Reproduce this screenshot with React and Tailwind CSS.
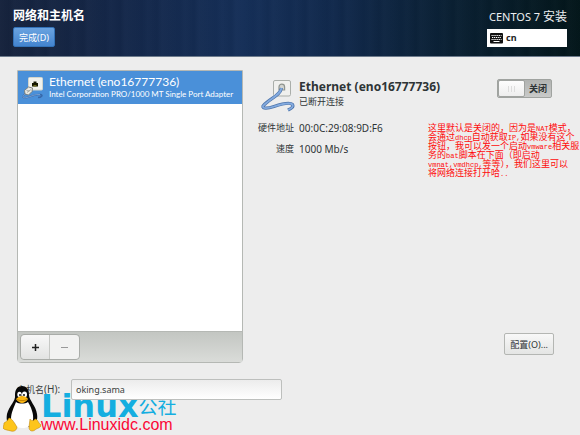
function PortIcon() {
  return (
    <svg viewBox="0 0 24 24" className="size-6 shrink-0" aria-hidden="true">
      <path d="M4 17C-1 21 1 22.500 5 21.500S13 18 18 18.500c4 .5 1 3-2 3" fill="none" stroke="#3869aa" strokeWidth="1.600" />
      <path d="M4 17C-1 21 1 22.500 5 21.500S13 18 18 18.500" fill="none" stroke="#9dbfe8" strokeWidth=".6" />
      <rect x="6.500" y="1.500" width="14" height="12.500" rx="1" fill="#f1f2ed" stroke="#d3d5cc" />
      <path d="M10 10.500V7h1.500V5.500h3V7H16v3.500z" fill="#151800" />
      <path d="M11.500 10.500h3V9h-3z" fill="#6b6a1c" />
      <path d="M2.500 14.500l4-3.500 4 1-.5 3.500-3.500 3.500-3.500-1z" fill="#e9e9e4" stroke="#777c77" strokeWidth=".9" />
      <path d="M4.500 14.500l3 .5M5 16.500l4-3" stroke="#8b908b" strokeWidth=".7" />
    </svg>
  );
}

function CableIcon() {
  return (
    <svg viewBox="0 0 36 34" className="h-[34px] w-9 shrink-0" aria-hidden="true">
      <rect x="13.500" y="1.500" width="17" height="15.500" rx="1.500" fill="#f0f0ee" stroke="#aaaeaa" />
      <path d="M19 11V8a2.800 2.800 0 0 1 5.600 0v3z" fill="#d2d4d0" stroke="#8f948f" strokeWidth="1.200" />
      <path d="M21.500 9C20 17 10 19 3 27C2 30 8 29.500 14 27.500S30 23 32.500 25.500C34 28 31 29.500 28 31" fill="none" stroke="#4d74ab" strokeWidth="3.200" strokeLinejoin="round" />
      <path d="M21.500 9C20 17 10 19 3 27C2 30 8 29.500 14 27.500S30 23 32.500 25.500C34 28 31 29.500 28 31" fill="none" stroke="#84abdf" strokeWidth="1.800" strokeLinejoin="round" />
    </svg>
  );
}

function KeyboardIcon() {
  return (
    <svg viewBox="0 0 13 11" className="h-[11px] w-[13px]" aria-hidden="true">
      <rect width="13" height="10.500" rx="1" fill="#111" />
      <path d="M1.500 2.500h10M2 4.500h9.500M1.500 6.500h10" stroke="#fff" strokeWidth="1" strokeDasharray="1.200 .7" />
      <path d="M3.500 8.500h6" stroke="#fff" />
    </svg>
  );
}

function Tux() {
  return (
    <svg viewBox="0 0 38 46" className="h-[46px] w-[38px]" aria-hidden="true">
      <path d="M12 9C12 3 15 0 19 0s7 3 7 9c0 5 7 11 8 19 1 6-1 11-6 13H10C4 39 3 34 4 28 6 20 13 15 12 9z" fill="#080808" />
      <path d="M13 16c3 2 9 2 12 0 3 5 6 12 5 18-1 6-5 8-11 8S8 39 8 33c0-6 3-12 5-17z" fill="#fff" />
      <ellipse cx="16.500" cy="8.500" rx="2.200" ry="2.800" fill="#fff" />
      <ellipse cx="21.500" cy="8.500" rx="2.500" ry="3" fill="#fff" />
      <circle cx="17" cy="9" r="1" fill="#111" />
      <circle cx="21" cy="9" r="1" fill="#111" />
      <path d="M13 13c2-2 4-3 6-3s5 1 6 3c-1 2-4 4-6 4s-5-2-6-4z" fill="#fbb612" />
      <path d="M14 13.500c3 1.500 7 1.500 10 0" fill="none" stroke="#a86b00" strokeWidth=".7" />
      <path d="M6 32c3 0 6 6 8 9 0 3-3 5-6 4-3-1-7-1-8-3 0-1 1-3 1-5 1-1 3-1 5-5z" fill="#fdc51b" stroke="#b67a00" strokeWidth=".5" />
      <path d="M27 33c1 2 4 2 5 0 3 0 3 4 6 6 0 3-4 3-6 5-3 2-6 1-6-3z" fill="#fdc51b" stroke="#b67a00" strokeWidth=".5" />
    </svg>
  );
}

function Header() {
  return (
    <header className="flex items-start justify-between border-b border-[#6d7b8c] bg-[repeating-linear-gradient(90deg,#ffffff03_0px,#00000008_9px,#ffffff04_14px,#00000004_31px,#ffffff03_37px),linear-gradient(90deg,#16233d_0%,#142749_20%,#152f58_42%,#11294c_58%,#0a2033_78%,#03161a_100%)] px-[13px] pt-2 pb-[9px]">
      <div className="flex flex-col items-start gap-1">
        <h1 className="text-[12px] leading-[15px] font-bold text-white">网络和主机名</h1>
        <button className="h-5 rounded-xs border border-[#3372b8] bg-linear-to-b from-[#6aa3e0] to-[#4384cf] px-[5px] text-[9px] leading-none text-white">
          完成(D)
        </button>
      </div>
      <div className="flex w-20 flex-col items-end gap-1">
        <p className="text-[11px] leading-[17px] whitespace-nowrap text-[#eef0f2]">CENTOS 7 <span className="text-[12px]">安装</span></p>
        <button className="flex h-[18px] w-full items-center gap-[3px] bg-white px-[3px] text-[9px] font-bold text-[#222]">
          <KeyboardIcon />
          cn
        </button>
      </div>
    </header>
  );
}

function DeviceList() {
  return (
    <section className="flex min-w-0 flex-col rounded-b-sm border border-[#b5b8b4] bg-white">
      <ul className="flex-1">
        <li>
          <button className="flex w-full items-center gap-[3px] bg-[#4a90d9] px-1 py-1 text-left font-[Lato,'Noto_Sans',sans-serif] text-white">
            <PortIcon />
            <span className="whitespace-nowrap">
              <span className="block text-[12px] leading-[14px]">Ethernet (eno16777736)</span>
              <span className="block text-[8px] leading-[11px]">Intel Corporation PRO/1000 MT Single Port Adapter</span>
            </span>
          </button>
        </li>
      </ul>
      <div className="flex border-t border-[#b5b8b4] bg-linear-to-b from-[#c3c6c2] to-[#dadcd9] p-[2px]">
        <div className="flex rounded-sm border border-[#a9aca8] text-[#2e3436]">
          <button aria-label="+" className="flex h-6 w-[29px] items-center justify-center rounded-l-sm border-r border-[#c6c8c5] bg-linear-to-b from-[#f8f8f8] to-[#e2e3e2]">
            <svg viewBox="0 0 9 9" className="size-[9px]"><path d="M4.500 1v7M1 4.500h7" stroke="#222" strokeWidth="1.500" /></svg>
          </button>
          <button aria-label="−" disabled className="flex h-6 w-[29px] items-center justify-center rounded-r-sm bg-[#f2f2f1]">
            <svg viewBox="0 0 9 9" className="size-[9px]"><path d="M1 4.500h7" stroke="#999" /></svg>
          </button>
        </div>
      </div>
    </section>
  );
}

function DeviceDetails() {
  return (
    <section className="flex min-w-0 flex-col pt-[9px] text-[#2e3436]">
      <div className="flex items-start pr-7">
        <div className="flex flex-1 items-start gap-[3px] pl-[3px]">
          <CableIcon />
          <div className="whitespace-nowrap">
            <h2 className="text-[12px] leading-4 font-bold">Ethernet (eno16777736)</h2>
            <p className="text-[9px] leading-[14px]">已断开连接</p>
          </div>
        </div>
        <button role="switch" aria-checked="false" className="flex h-[19px] w-[55px] items-center rounded-xs border border-[#a0a3a0] bg-linear-to-b from-[#b1b3b1] to-[#c9cac9] text-[9px] font-bold">
          <span className="flex h-[17px] w-[27px] items-center justify-center gap-[2px] rounded-xs border border-[#a0a3a0] bg-linear-to-b from-[#fdfdfd] to-[#eeeeee]">
            <i className="h-[6px] w-px bg-[#dddddd]" />
            <i className="h-[6px] w-px bg-[#dddddd]" />
            <i className="h-[6px] w-px bg-[#dddddd]" />
          </span>
          <span className="flex-1">关闭</span>
        </button>
      </div>
      <div className="mt-2 flex justify-between">
        <dl className="grid grid-cols-[37px_auto] content-start gap-x-[5px] gap-y-[7px] text-[9px] leading-[14px] whitespace-nowrap">
          <dt className="text-right">硬件地址</dt>
          <dd className="text-[10px]">00:0C:29:08:9D:F6</dd>
          <dt className="text-right">速度</dt>
          <dd className="text-[10px]">1000 Mb/s</dd>
        </dl>
        <p className="mt-1 w-[152px] font-['Liberation_Mono','Noto_Sans_CJK_SC',monospace] text-[9px] leading-[9px] whitespace-nowrap text-[#ff0a0a]">
          这里默认是关闭的，因为是<span className="text-[7px]">NAT</span>模式，<br />
          会通过<span className="text-[7px]">dhcp</span>自动获取<span className="text-[7px]">IP,</span>如果没有这个<br />
          按钮，我可以发一个启动<span className="text-[7px]">vmware</span>相关服<br />
          务的<span className="text-[7px]">bat</span>脚本在下面（即启动<br />
          <span className="text-[7px]">vmnat,vmdhcp,</span>等等），我们这里可以<br />
          将网络连接打开哈<span className="text-[7px]">..</span>
        </p>
      </div>
      <button className="mt-auto mr-[26px] mb-2 h-[22px] self-end rounded-xs border border-[#b4b6b3] bg-linear-to-b from-[#f8f8f8] to-[#e4e5e4] px-[5px] text-[9px] leading-none">
        配置(O)...
      </button>
    </section>
  );
}

function Watermark() {
  return (
    <div className="pointer-events-none absolute bottom-[3px] left-[3px] flex items-end">
      <Tux />
      <div className="font-['Liberation_Sans','Noto_Sans_CJK_SC',sans-serif] whitespace-nowrap">
        <p className="flex items-end leading-[22px] text-[#14aee0]">
          <span className="font-['DejaVu_Sans',sans-serif] text-[32px] font-bold">Linux</span>
          <span className="text-[19px] leading-[18px]">公社</span>
        </p>
        <p className="text-[16px] leading-[15px] text-[#fb0735]">www.Linuxidc.com</p>
      </div>
    </div>
  );
}

export default function App() {
  return (
    <div className="relative flex min-h-screen flex-col bg-[#ededed] font-['Noto_Sans','Noto_Sans_CJK_SC',sans-serif]">
      <Header />
      <main className="flex flex-1 flex-col pt-[13px] pb-[35px] pl-[17px]">
        <div className="grid flex-1 grid-cols-[7fr_10fr] gap-[14px]">
          <DeviceList />
          <DeviceDetails />
        </div>
        <div className="mt-4 flex items-center gap-2 text-[9px] text-[#3a3f40]">
          <label htmlFor="hostname" className="w-[46px] whitespace-nowrap">主机名<span className="text-[10px]">(H):</span></label>
          <input id="hostname" defaultValue="oking.sama" className="relative z-10 h-[21px] w-[37.5%] rounded-xs border border-[#bdbfbd] bg-linear-to-b from-[#ececec] to-white px-1" />
        </div>
      </main>
      <Watermark />
    </div>
  );
}
